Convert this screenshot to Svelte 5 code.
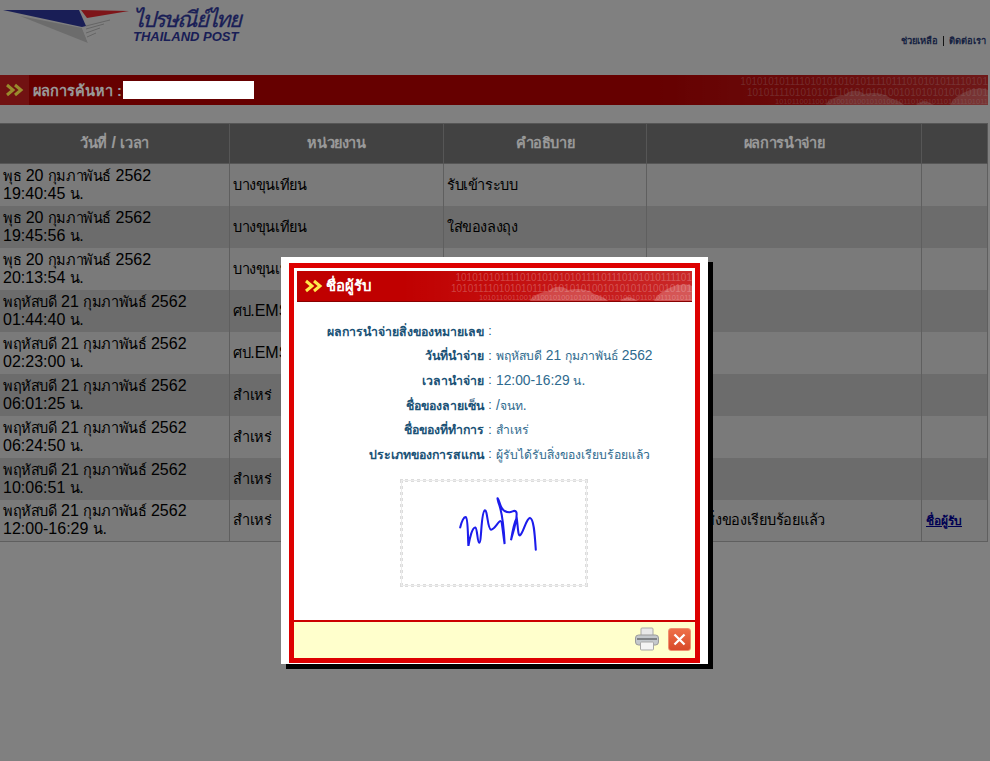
<script>
  const rows = [
    ['พุธ 20 กุมภาพันธ์ 2562', '19:40:45 น.', 'บางขุนเทียน', 'รับเข้าระบบ', '', false],
    ['พุธ 20 กุมภาพันธ์ 2562', '19:45:56 น.', 'บางขุนเทียน', 'ใส่ของลงถุง', '', false],
    ['พุธ 20 กุมภาพันธ์ 2562', '20:13:54 น.', 'บางขุนเทียน', '', '', false],
    ['พฤหัสบดี 21 กุมภาพันธ์ 2562', '01:44:40 น.', 'ศป.EMS', '', '', false],
    ['พฤหัสบดี 21 กุมภาพันธ์ 2562', '02:23:00 น.', 'ศป.EMS', '', '', false],
    ['พฤหัสบดี 21 กุมภาพันธ์ 2562', '06:01:25 น.', 'สำเหร่', '', '', false],
    ['พฤหัสบดี 21 กุมภาพันธ์ 2562', '06:24:50 น.', 'สำเหร่', '', '', false],
    ['พฤหัสบดี 21 กุมภาพันธ์ 2562', '10:06:51 น.', 'สำเหร่', '', '', false],
    ['พฤหัสบดี 21 กุมภาพันธ์ 2562', '12:00-16:29 น.', 'สำเหร่', '', 'ผู้รับได้รับสิ่งของเรียบร้อยแล้ว', true]
  ];
  const details = [
    ['ผลการนำจ่ายสิ่งของหมายเลข', ''],
    ['วันที่นำจ่าย', 'พฤหัสบดี 21 กุมภาพันธ์ 2562'],
    ['เวลานำจ่าย', '12:00-16:29 น.'],
    ['ชื่อของลายเซ็น', '/จนท.'],
    ['ชื่อของที่ทำการ', 'สำเหร่'],
    ['ประเภทของการสแกน', 'ผู้รับได้รับสิ่งของเรียบร้อยแล้ว']
  ];
  const headers = ['วันที่ / เวลา', 'หน่วยงาน', 'คำอธิบาย', 'ผลการนำจ่าย', ''];
  const binary = [
    '1010101011110101010101011110111010101011110101',
    '10101111010101011101010101001010101010010101',
    '1010110011001010010100101010010110100101101011101011'
  ];
  const isThai = (s) => /[\u0E00-\u0E7F]/.test(s);
  const parts = (s) => s.split(/([\u0E00-\u0E7F]+)/).filter(Boolean);
</script>

{#snippet txt(s)}
  {#each parts(s) as p}{#if isThai(p)}<span class="thai">{p}</span>{:else}{p}{/if}{/each}
{/snippet}

{#snippet barArt(n)}
  <div class="art">
    <svg class="map" viewBox="0 0 290 30" preserveAspectRatio="none" aria-hidden="true">
      <path d="M128 30 C130 24 138 22 146 20 C152 15 160 14 166 19 C176 17 186 18 192 23 C198 25 204 27 206 30 Z" />
      <path d="M218 30 C222 26 228 25 232 28 L236 30 Z" />
      <path d="M252 30 C256 22 264 18 272 15 C280 13 286 13 290 15 L290 30 Z" />
    </svg>
    {#each binary as line, i}<div class="digits d{i}">{line.slice(0, n + i * 6)}</div>{/each}
  </div>
{/snippet}

{#snippet arrows(cls)}
  <svg class={cls} viewBox="0 0 20 14" aria-hidden="true">
    <path d="M1 2 L7 7 L1 12 M9 2 L15 7 L9 12" transform="translate(1 0)" />
  </svg>
{/snippet}

<div class="page">
  <header class="top">
    <div class="logo">
      <svg class="wing" viewBox="0 0 130 46" aria-hidden="true">
        <polygon points="1,1 77,1 84,17 80,18" fill="#2b3390" />
        <polygon points="79,1 127,2 85,9" fill="#d2232a" />
        <polygon points="18,7 80,19 86,34" fill="#b4b4b4" />
        <polygon points="80,19 106,11 86,34" fill="#d8d8d8" />
        <path d="M84 17 L108 11 M84 20 L102 15 M84 24 L98 19 M85 28 L94 24" stroke="#a8a8a8" stroke-width="1" fill="none" />
      </svg>
      <div class="logotext">
        <div class="th">ไปรษณีย์ไทย</div>
        <div class="en">THAILAND POST</div>
      </div>
    </div>
    <nav class="toplinks"><span>ช่วยเหลือ</span><i></i><span>ติดต่อเรา</span></nav>
  </header>

  <section class="bar">
    {@render barArt(46)}
    <span class="barIcon">{@render arrows('arrow')}</span>
    <span class="barTitle">ผลการค้นหา :</span>
    <span class="redact"></span>
  </section>

  <table>
    <colgroup>
      <col style="width:230px" /><col style="width:214px" /><col style="width:203px" /><col style="width:275px" /><col style="width:66px" />
    </colgroup>
    <thead>
      <tr>{#each headers as h}<th>{@render txt(h)}</th>{/each}</tr>
    </thead>
    <tbody>
      {#each rows as r}
        <tr>
          <td>{@render txt(r[0])}<br />{@render txt(r[1])}</td>
          <td>{@render txt(r[2])}</td>
          <td>{@render txt(r[3])}</td>
          <td class="result">{@render txt(r[4])}</td>
          <td>{#if r[5]}<a href="#top">ชื่อผู้รับ</a>{/if}</td>
        </tr>
      {/each}
    </tbody>
  </table>
</div>

<div class="overlay"></div>

<div class="modal">
  <div class="frame">
    <div class="mbar">
      {@render barArt(44)}
      {@render arrows('arrow marrow')}
      <span class="mtitle">ชื่อผู้รับ</span>
    </div>
    <div class="mbody">
      <dl>
        {#each details as d}
          <div class="line"><dt>{d[0]}</dt><span class="colon">:</span><dd>{@render txt(d[1])}</dd></div>
        {/each}
      </dl>
      <div class="sig">
        <svg viewBox="45 27 563 321" aria-label="ลายเซ็น">
          <path d="M220 170 C225 150 232 135 238 138 C245 142 244 200 246 228 C250 205 258 168 268 170 C274 172 274 218 280 218 C288 218 285 120 298 116 C306 114 306 175 317 177 C328 178 340 150 347 150 C352 150 356 200 360 222 C358 180 352 120 340 90 C335 72 338 75 345 95 C350 115 360 122 375 122 C385 122 392 112 397 122 C402 140 385 190 380 210 C385 180 392 150 398 140 C402 170 402 195 408 195 C418 190 428 140 440 140 C452 142 455 195 458 240" />
        </svg>
      </div>
    </div>
    <div class="mfoot">
      <svg class="printer" viewBox="0 0 24 24" aria-label="พิมพ์">
        <rect x="6" y="1" width="12" height="8" rx="1" fill="#e8e8e8" stroke="#a8a8a8" />
        <rect x="0.5" y="8" width="23" height="10" rx="3" fill="#c4c8cc" stroke="#9a9a9a" />
        <rect x="2" y="11" width="20" height="2" fill="#7f8285" />
        <rect x="5.5" y="15" width="13" height="8" rx="1" fill="#f4f4f4" stroke="#a8a8a8" />
      </svg>
      <button class="close" aria-label="ปิด">
        <svg viewBox="0 0 23 23"><path d="M6 6 L17 17 M17 6 L6 17" /></svg>
      </button>
    </div>
  </div>
</div>

<style>
  :global(body) {
    margin: 0;
    background: #d5d5d5;
    font-family: "Liberation Sans", Arial, sans-serif;
  }
  .page { min-height: 761px; width: 990px; overflow: hidden; }
  .top { height: 75px; position: relative; display: flex; justify-content: space-between; }
  .logo { display: flex; padding: 9px 0 0 2px; height: 46px; }
  .wing { width: 130px; height: 46px; }
  .logotext { color: #2b3390; font-style: italic; margin-left: 1px; }
  .th { font-size: 22px; line-height: 22px; letter-spacing: -1.9px; -webkit-text-stroke: 0.3px #2b3390; }
  .en { font-size: 13px; line-height: 11px; font-weight: bold; }
  .toplinks {
    align-self: flex-start; margin: 35px 4px 0 0; display: flex; align-items: center;
    gap: 5px; font-size: 9.4px; font-weight: bold; color: #2a3a6e; line-height: 12px;
  }
  .toplinks i { width: 1px; height: 10px; background: #222; }

  .bar {
    height: 30px; position: relative; display: flex; align-items: center; overflow: hidden;
    background: #aa0000; color: #fff; width: 988px;
  }
  .barIcon { width: 29px; height: 30px; background: #bd1e1e; display: flex; align-items: center; justify-content: center; position: relative; }
  .arrow { width: 20px; height: 14px; fill: none; stroke: #ffe94a; stroke-width: 3; }
  .barTitle { margin-left: 4px; font-size: 14.5px; font-weight: bold; position: relative; white-space: pre; }
  .redact {
    position: absolute; left: 123px; top: 6px; width: 131px; height: 18px; background: #fff; z-index: 20;
  }
  .art {
    position: absolute; right: 0; top: 0; bottom: 0; width: 340px; overflow: hidden; padding-top: 1px; box-sizing: border-box;
    background: linear-gradient(90deg, rgba(255,255,255,0), rgba(255,255,255,.16));
    color: rgba(255,255,255,.24); font-size: 10px; line-height: 11px; white-space: nowrap; text-align: right;
  }
  .d2 { font-size: 7.5px; line-height: 7px; }
  .mbar .art { width: 290px; }
  .map { position: absolute; right: 0; bottom: 0; width: 290px; height: 30px; fill: rgba(255,255,255,.22); }

  table {
    border-collapse: collapse; table-layout: fixed; width: 988px; margin: 18px 0 0 -1px;
    font-size: 16px; color: #000;
  }
  th {
    background: #6e6e6e; color: #fff; font-size: 16px; font-weight: bold; height: 37px; padding: 0 0 2px;
    border: 1px solid #8f8f8f; text-align: center;
  }
  td {
    height: 42px; padding: 0 3px; border-left: 1px solid #9e9e9e; border-right: 1px solid #9e9e9e;
    line-height: 18px; box-sizing: border-box; vertical-align: middle;
  }
  tbody tr:last-child td { border-bottom: 1px solid #9e9e9e; }
  .thai { font-size: 14.5px; letter-spacing: -0.4px; }
  .result .thai { letter-spacing: -0.27px; }
  tbody tr:nth-child(odd) td { background: #cbcbcb; }
  tbody tr:nth-child(even) td { background: #b4b4b4; }
  td a { color: #00008b; font-weight: bold; font-size: 12px; margin-left: 1px; }

  .overlay { position: absolute; inset: 0; height: 761px; background: rgba(0,0,0,.4); z-index: 5; }

  .modal {
    position: absolute; left: 281px; top: 257px; width: 427px; height: 407px; z-index: 10;
    background: #fff; box-shadow: 5px 5px 0 #000; box-sizing: border-box; padding: 6px 8px 1px;
  }
  .frame {
    height: 400px; box-sizing: border-box; border: 5px solid #dd0000; display: flex; flex-direction: column;
  }
  .mbar {
    margin: 3px 3px 0; height: 31px; box-sizing: border-box; position: relative; overflow: hidden; flex: none;
    background: #c00000; border-bottom: 1px solid #800; display: flex; align-items: center; color: #fff;
  }
  .marrow { margin-left: 7px; position: relative; flex: none; }
  .mtitle { font-size: 15px; font-weight: bold; margin-left: 2px; position: relative; }
  .mbody { flex: 1; display: flex; flex-direction: column; align-items: center; min-height: 0; }
  dl { margin: 17px 0 0; align-self: stretch; font-size: 12.35px; }
  .line { display: flex; height: 24.6px; align-items: center; }
  dt { width: 190px; text-align: right; font-weight: bold; color: #1a5276; white-space: nowrap; }
  .colon { width: 12px; text-align: center; color: #1a5276; flex: none; }
  dd { margin: 0; color: #2e6a8e; white-space: nowrap; font-size: 13.8px; }
  dd .thai { font-size: 12.2px; letter-spacing: 0; }
  .sig {
    margin: 12px 0 0 -2px; width: 188px; height: 108px; box-sizing: border-box; border: 3px dotted #dcdcdc;
    outline: 1px solid #ececec; outline-offset: -2px; background: #fff;
  }
  .sig svg { display: block; width: 100%; height: 100%; fill: none; stroke: #1c1cec; stroke-width: 6.5; stroke-linecap: round; }
  .mfoot {
    flex: none; height: 38px; box-sizing: border-box; background: #ffffcc; border-top: 2px solid #cc0000;
    display: flex; justify-content: flex-end; align-items: center; gap: 9px; padding: 0 4px 2px 0;
  }
  .printer { width: 24px; height: 24px; display: block; flex: none; }
  .close {
    flex: none; width: 23px; height: 23px; box-sizing: border-box; padding: 0; border: 1px solid #f09070; border-radius: 3px;
    background: linear-gradient(#ee7048, #d84a2a); display: block;
  }
  .close svg { display: block; width: 100%; height: 100%; fill: none; stroke: #fff; stroke-width: 2.5; }
</style>
